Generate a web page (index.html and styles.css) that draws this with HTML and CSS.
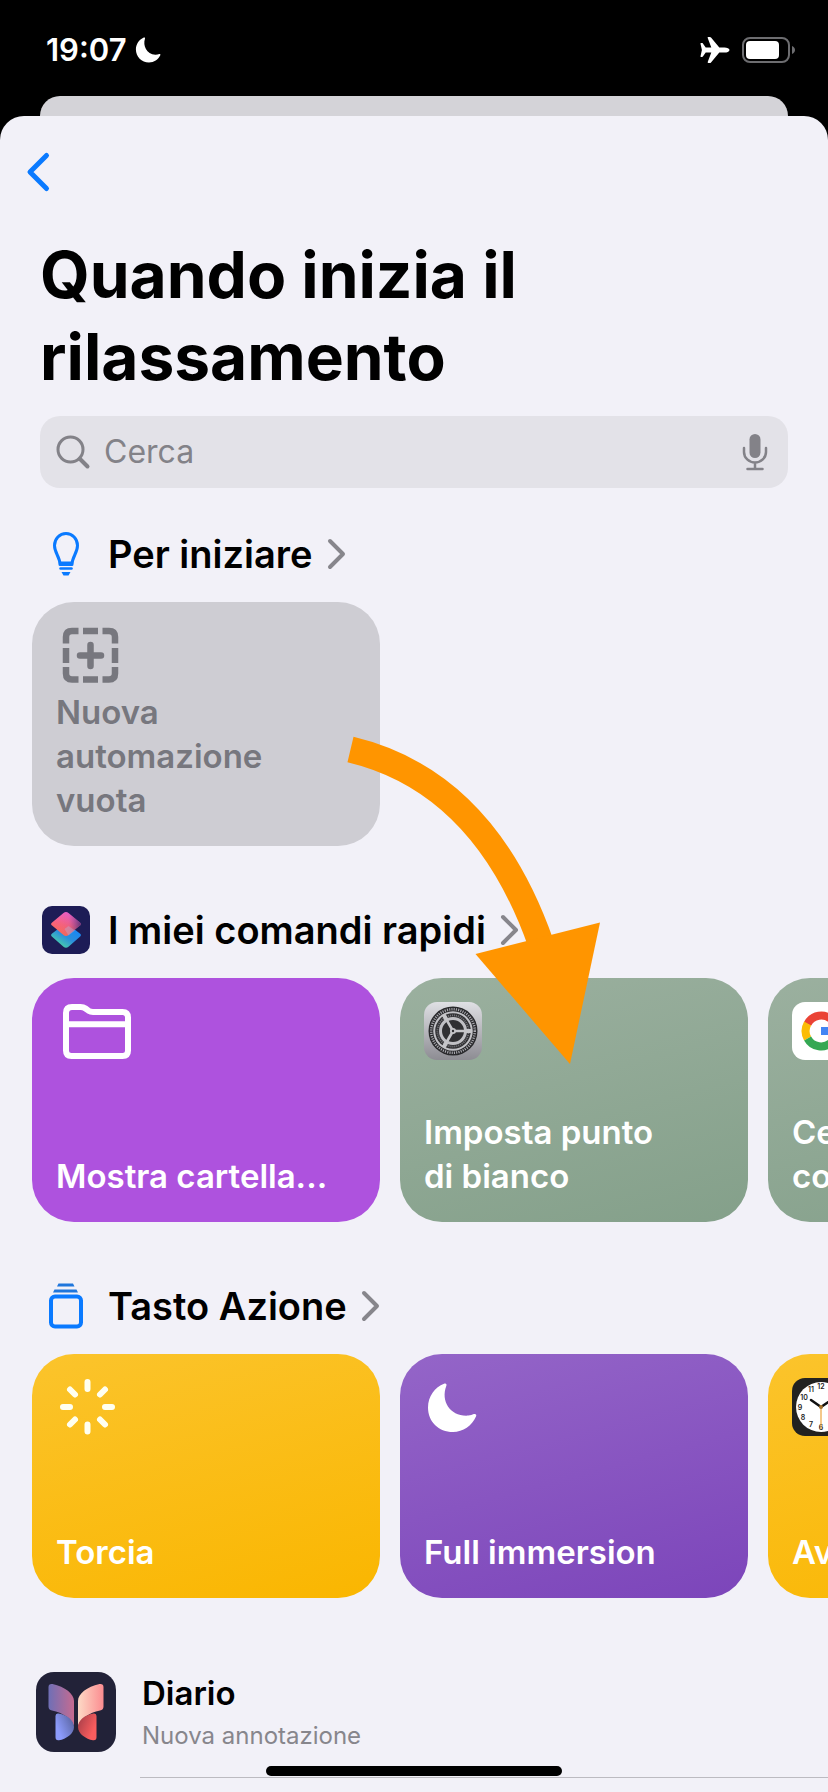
FILE: index.html
```html
<!DOCTYPE html>
<html lang="it">
<head>
<meta charset="utf-8">
<meta name="viewport" content="width=device-width, initial-scale=1">
<title>Quando inizia il rilassamento</title>
<link rel="stylesheet" href="styles.css">
</head>
<body>
<header class="status">
  <div class="status-left">
    <span class="time">19:07</span>
    <svg width="26" height="26" viewBox="0 0 26 26" aria-hidden="true"><path fill="#fff" d="M8.800.6c.8-.4 1.500.2 1.200 1C7.600 8.500 11.500 17.800 20.500 17.700c1.500 0 2.600-.2 3.800-.6.800-.3 1.400.4 1 1.200C23.200 22.700 19 25.500 14 25.500 6.600 25.500.9 19.800.9 12.600.9 7.200 4 2.700 8.800.6Z"/></svg>
  </div>
  <div class="status-right">
    <svg width="30" height="28" viewBox="0 0 30 28" aria-hidden="true"><path fill="#fff" d="M29.500 14c0 1.700-2.500 2.600-5 2.600h-5.200l-8.300 9.800c-.3.400-.7.600-1.100.6H8.300c-.5 0-.8-.4-.6-.9l3.600-9.500H5.700l-2.800 3.900c-.2.300-.5.400-.8.400H1c-.4 0-.6-.3-.5-.7L1.900 14 .5 7.800c-.1-.4.100-.7.500-.7h1.100c.3 0 .6.100.8.400l2.800 3.900h5.600L7.700 1.900c-.2-.5.100-.9.600-.9h1.600c.4 0 .8.200 1.100.6l8.300 9.800h5.200c2.500 0 5 .9 5 2.600Z"/></svg>
    <svg width="54" height="26" viewBox="0 0 54 26" aria-hidden="true"><rect x="1" y="1" width="46" height="24" rx="7" fill="none" stroke="#6d6d70" stroke-width="2"/><rect x="4" y="4" width="33" height="18" rx="4" fill="#fff"/><path d="M50 9c4 1.500 4 6.500 0 8Z" fill="#6d6d70"/></svg>
  </div>
</header>
<div class="sheet-behind"></div>
<main class="sheet">
  <button class="back" type="button" aria-label="Indietro"><svg width="24" height="40" viewBox="0 0 24 40"><path d="M20.500 3.500 4 20l16.500 16.500" fill="none" stroke="#0a7aff" stroke-width="5" stroke-linecap="round" stroke-linejoin="round"/></svg></button>
  <h1>Quando inizia il<br>rilassamento</h1>
  <div class="search">
    <svg width="34" height="34" viewBox="0 0 34 34" fill="none" stroke="#838288" stroke-linecap="round" aria-hidden="true"><circle cx="14.500" cy="14.500" r="12.500" stroke-width="3"/><path d="m24 24 7.500 7.500" stroke-width="4"/></svg>
    <input type="search" placeholder="Cerca" aria-label="Cerca">
    <button class="mic" type="button" aria-label="Dettatura"><svg width="26" height="38" viewBox="0 0 26 38" fill="none" stroke="#838288" stroke-width="2.500" stroke-linecap="round"><rect x="7.500" y="1" width="11" height="24" rx="5.500" fill="#838288" stroke="none"/><path d="M2 15v4a11 10.500 0 0 0 22 0v-4M13 30v6M5.500 36h15"/></svg></button>
  </div>

  <section>
    <h2><button class="heading" type="button">
      <svg class="symbol" viewBox="0 0 48 48" fill="none" stroke="#0a7aff" aria-hidden="true"><path d="M18 34.500c0-7.500-5.500-11.500-5.500-19A11.500 12 0 0 1 24 3.500a11.500 12 0 0 1 11.500 12c0 7.500-5.500 11.500-5.500 19Z" stroke-width="3" stroke-linejoin="round"/><path d="M17.500 33h13" stroke-width="3"/><path d="M18.500 38.500h11" stroke-width="2.500" stroke-linecap="round"/><path d="M19.500 42h9l-2 3.500h-5Z" fill="#0a7aff" stroke="none"/></svg>
      <span>Per iniziare</span>
      <svg class="chevron" viewBox="0 0 20 30" aria-hidden="true"><path d="M3 2l13 13L3 28"/></svg>
    </button></h2>
    <div class="cards">
      <button class="card gray" type="button">
        <svg class="glyph" viewBox="0 0 70 58" fill="none" stroke="#77777e" stroke-width="6.500" aria-hidden="true"><path d="M10 17.500V11q0-6 6-6h6.500M46.500 5H53q6 0 6 6v6.500M59 41v6.500q0 6-6 6h-6.500M22.500 53.500H16q-6 0-6-6V41M27 5h15M27 53.500h15M10 22v15M59 22v15"/><path d="M34.500 19v21M24 29.500h21" stroke-linecap="round"/></svg>
        <span class="label">Nuova<br>automazione<br>vuota</span>
      </button>
    </div>
  </section>

  <section>
    <h2><button class="heading" type="button">
      <svg class="symbol" viewBox="0 0 48 48" aria-hidden="true">
        <defs>
          <linearGradient id="s1" x1=".65" y1="0" x2=".3" y2="1"><stop stop-color="#ee5fd0"/><stop offset=".55" stop-color="#f9637c"/><stop offset="1" stop-color="#fa6c50"/></linearGradient>
          <linearGradient id="s2" x1=".9" y1=".2" x2=".25" y2="1"><stop stop-color="#1485fa"/><stop offset=".5" stop-color="#2b8fdc"/><stop offset="1" stop-color="#4edba0"/></linearGradient>
          <linearGradient id="s3" x1="0" x2="1"><stop stop-color="#ff6a70" stop-opacity="0"/><stop offset=".6" stop-color="#7c3f98" stop-opacity=".1"/><stop offset="1" stop-color="#3a2a72" stop-opacity=".8"/></linearGradient>
        </defs>
        <rect width="48" height="48" rx="10" fill="#1d1c56"/>
        <path d="m21.500 18.800-11.400 8.700q-2 1.600 0 3.200l11.400 10q2.500 2 5 0l11.400-10q2-1.600 0-3.200l-11.400-8.700q-2.500-2-5 0Z" fill="url(#s2)"/>
        <path d="M21.500 7 10.100 16.400q-2 1.600 0 3.200L21.500 29q2.500 2 5 0l11.400-9.400q2-1.600 0-3.200L26.500 7q-2.500-2-5 0Z" fill="url(#s1)"/>
        <path d="M21.500 7 10.100 16.400q-2 1.600 0 3.200L21.500 29q2.500 2 5 0l11.400-9.400q2-1.600 0-3.200L26.500 7q-2.500-2-5 0Z" fill="url(#s3)"/>
        <path d="m26.500 20-4 3 4 6.500 6.500-5Z" fill="#b9a8d0" fill-opacity=".45"/>
      </svg>
      <span>I miei comandi rapidi</span>
      <svg class="chevron" viewBox="0 0 20 30" aria-hidden="true"><path d="M3 2l13 13L3 28"/></svg>
    </button></h2>
    <div class="cards">
      <button class="card violet" type="button">
        <svg class="glyph" viewBox="0 0 70 58" fill="none" stroke="#fff" stroke-width="6" stroke-linejoin="round" aria-hidden="true"><path d="M10 11q0-6 6-6h8.500q3 0 5 1.500l3 2.200q2 1.300 4.500 1.300H66.500q5.500 0 5.500 5.500V48.500q0 5.500-5.500 5.500h-51q-5.500 0-5.500-5.500ZM10 22.200h62"/></svg>
        <span class="label">Mostra cartella...</span>
      </button>
      <button class="card sage" type="button">
        <svg class="app" viewBox="0 0 58 58" aria-hidden="true">
          <defs><linearGradient id="gr" x1="0" y1="0" x2="0" y2="1"><stop stop-color="#dfe0e4"/><stop offset="1" stop-color="#8d8c93"/></linearGradient></defs>
          <rect width="58" height="58" rx="13" fill="url(#gr)"/>
          <circle cx="29" cy="29" r="24.500" fill="#29292c"/>
          <circle cx="29" cy="29" r="21.800" fill="none" stroke="#aaaab0" stroke-width="2.500" stroke-dasharray="1.100 1.183"/>
          <circle cx="29" cy="29" r="19.800" fill="#c0c0c5"/>
          <circle cx="29" cy="29" r="17.800" fill="#303033"/>
          <circle cx="29" cy="29" r="15.600" fill="none" stroke="#78787e" stroke-width="1.800" stroke-dasharray="1 1"/>
          <circle cx="29" cy="29" r="12.500" fill="#303033" stroke="#c0c0c5" stroke-width="3"/>
          <path d="M29 29h19M29 29l-9.500-16.500M29 29l-9.500 16.500" stroke="#c5c5c9" stroke-width="2.600"/>
          <path d="M42 29h6M22.500 17.700l-3-5.200M22.500 40.300l-3 5.200" stroke="#c5c5c9" stroke-width="4"/>
          <circle cx="29" cy="29" r="3" fill="#c5c5c9"/><circle cx="29" cy="29" r="1.200" fill="#303033"/>
        </svg>
        <span class="label">Imposta punto<br>di bianco</span>
      </button>
      <button class="card sage" type="button">
        <svg class="app" viewBox="0 0 58 58" aria-hidden="true"><rect width="58" height="58" rx="13" fill="#fff"/><g fill="none" stroke-width="8"><path d="M15.500 22a15.300 15.300 0 0 1 24.500-4" stroke="#ea4335"/><path d="M15.600 36.500a15.300 15.300 0 0 1 0-15" stroke="#fbbc05"/><path d="M39.800 40A15.300 15.300 0 0 1 15.600 36.500" stroke="#34a853"/><path d="M39.800 40a15.300 15.300 0 0 0 4.500-11H29" stroke="#4285f4"/></g></svg>
        <span class="label">Cerca<br>con Google</span>
      </button>
    </div>
  </section>

  <section>
    <h2><button class="heading" type="button">
      <svg class="symbol" viewBox="0 0 48 48" fill="none" stroke="#0a7aff" aria-hidden="true"><rect x="9" y="14.500" width="30" height="30" rx="4" stroke-width="4"/><path d="m12.500 7.500-1.500 3h25l-1.500-3ZM16.500 1.500 15 4.500h17.500l-1.500-3Z" fill="#1f76dc" stroke="none"/></svg>
      <span>Tasto Azione</span>
      <svg class="chevron" viewBox="0 0 20 30" aria-hidden="true"><path d="M3 2l13 13L3 28"/></svg>
    </button></h2>
    <div class="cards">
      <button class="card yellow" type="button">
        <svg class="glyph" viewBox="0 0 70 58" stroke="#fffff0" stroke-width="6" stroke-linecap="round" aria-hidden="true"><path d="M31.500 4v7M31.500 46.500v7M7 29h7M49 29h7M14 11.500l5 5M44 41.500l5 5M49 11.500l-5 5M19 41.500l-5 5"/></svg>
        <span class="label">Torcia</span>
      </button>
      <button class="card purple" type="button">
        <svg class="glyph" viewBox="0 0 70 58" aria-hidden="true"><path fill="#fff" d="M20 5.800c1.800-.8 3.100.2 2.300 2.100-6 15.500 4.500 31 22 29.700 2.500-.2 3.700-.8 5.500-1.500 1.900-.7 3.100.700 2.200 2.500C48 48 39 54 29 54 14.500 54 4 43.500 4 29.500 4 18.500 11 9 20 5.800Z"/></svg>
        <span class="label">Full immersion</span>
      </button>
      <button class="card yellow" type="button">
        <svg class="app" viewBox="0 0 58 58" aria-hidden="true"><rect width="58" height="58" rx="13" fill="#222220"/><circle cx="29" cy="29" r="25" fill="#fff"/><g class="numerals"><text x="29" y="11">12</text><text x="19" y="14">11</text><text x="12" y="22">10</text><text x="8" y="32">9</text><text x="11" y="42">8</text><text x="19" y="49">7</text><text x="29" y="52">6</text></g><path d="m29 29-10-7M29 29l13-9" stroke="#111" stroke-width="2.500" stroke-linecap="round"/><path d="M29 27v24" stroke="#eda33c" stroke-width="1.200"/><circle cx="29" cy="29" r="2" fill="#a5732c"/></svg>
        <span class="label">Avvia</span>
      </button>
    </div>
  </section>

  <a class="row" href="#diario">
    <svg class="row-icon" viewBox="0 0 80 80" aria-hidden="true">
      <defs>
        <linearGradient id="j1" x1="0" x2="1"><stop stop-color="#6f6fb6"/><stop offset="1" stop-color="#c66b90"/></linearGradient>
        <linearGradient id="j2" x1="0" x2="1"><stop stop-color="#fddac6"/><stop offset="1" stop-color="#fb8c90"/></linearGradient>
        <linearGradient id="j3" x1=".2" y1=".7" x2="1" y2=".2"><stop stop-color="#8c9bfb"/><stop offset="1" stop-color="#59639f"/></linearGradient>
        <linearGradient id="j4" x1=".8" y1=".7" x2="0" y2=".2"><stop stop-color="#fa5d5e"/><stop offset="1" stop-color="#a93f49"/></linearGradient>
      </defs>
      <rect width="80" height="80" rx="18" fill="#222238"/>
      <path d="M12.500 15q0-3.500 4-3C29 14.500 38 22 38 29v25C35 46 27 41 16 38.500q-3.500-.7-3.500-4Z" fill="url(#j1)"/>
      <path d="M67.500 15q0-3.500-4-3C51 14.500 42 22 42 29v25C45 46 53 41 64 38.500q3.500-.7 3.500-4Z" fill="url(#j2)"/>
      <path d="M19.500 44q0-3 3-2.500C32 43 38 49 38 55c0 7-8 12-15 13.300q-3.500.5-3.500-3Z" fill="url(#j3)"/>
      <path d="M60.500 44q0-3-3-2.500C48 43 42 49 42 55c0 7 8 12 15 13.300q3.500.5 3.500-3Z" fill="url(#j4)"/>
    </svg>
    <span class="row-text"><span class="row-title">Diario</span><span class="row-sub">Nuova annotazione</span></span>
  </a>
  <svg class="arrow" width="260" height="332" viewBox="345 735 260 332" aria-hidden="true"><path d="M350.500 749.500Q484 781.500 541 944" fill="none" stroke="#ff9500" stroke-width="26"/><path d="M475.500 954 600 922.500 570 1064Z" fill="#ff9500"/></svg>
</main>
<div class="home-indicator"></div>
</body>
</html>
```

FILE: styles.css
```css
* { box-sizing: border-box; }
html { background: #000; }
body {
  margin: 0;
  min-height: 100vh;
  display: flex;
  flex-direction: column;
  overflow-x: hidden;
  font-family: Inter, "Liberation Sans", sans-serif;
  color: #000;
}
button {
  font: inherit;
  color: inherit;
  border: 0;
  padding: 0;
  background: none;
  text-align: left;
}
svg { display: block; flex: none; overflow: visible; }

.status {
  height: 96px;
  padding: 4px 32px 0 46px;
  display: flex;
  justify-content: space-between;
  align-items: center;
}
.status-left, .status-right { display: flex; align-items: center; }
.status-left { gap: 8px; }
.status-right { gap: 12px; }
.time { color: #fff; font-size: 31px; font-weight: 600; line-height: 40px; }

.sheet-behind {
  height: 20px;
  margin: 0 40px;
  border-radius: 20px 20px 0 0;
  background: #d4d3d8;
}
.sheet {
  position: relative;
  flex: 1;
  background: #f2f1f8;
  border-radius: 24px 24px 0 0;
  overflow: hidden;
}
.back { display: block; margin: 36px 0 0 26px; }
h1 {
  margin: 42px 40px 18px;
  font-size: 64px;
  line-height: 82px;
  font-weight: 700;
}

.search {
  height: 72px;
  margin: 0 40px;
  padding: 0 20px 0 16px;
  display: flex;
  align-items: center;
  gap: 14px;
  border-radius: 20px;
  background: #e3e2e8;
}
.search input {
  flex: 1;
  min-width: 0;
  height: 72px;
  padding: 0;
  border: 0;
  outline: 0;
  background: none;
  font: 400 32px/72px Inter, sans-serif;
  color: #000;
}
.search input::placeholder { color: #838288; opacity: 1; }

section { margin-bottom: 36px; }
.search + section { margin-top: 18px; }
h2 { margin: 0; font-size: 38px; font-weight: 600; line-height: 48px; }
.heading {
  height: 96px;
  padding: 0 42px;
  display: flex;
  align-items: center;
  gap: 18px;
}
.symbol { width: 48px; height: 48px; }
.chevron {
  width: 20px;
  height: 30px;
  margin-left: -4px;
  fill: none;
  stroke: #87868c;
  stroke-width: 4;
  stroke-linecap: round;
  stroke-linejoin: round;
}

.cards { display: flex; gap: 20px; padding-left: 32px; }
.card {
  flex: none;
  width: 348px;
  height: 244px;
  padding: 24px;
  display: flex;
  flex-direction: column;
  justify-content: space-between;
  border-radius: 42px;
  color: #fff;
}
.app { width: 58px; height: 58px; }
.glyph { width: 70px; height: 58px; }
.label { font-size: 33px; font-weight: 600; line-height: 44px; white-space: nowrap; }
.gray { background: #cecdd3; color: #77777e; }
.violet { background: #ae52de; }
.sage { background: linear-gradient(165deg, #9bb09f, #84a08a); }
.yellow { background: linear-gradient(165deg, #fbc42c, #fab600); }
.purple { background: linear-gradient(165deg, #9465c8, #7c45ba); }
.numerals { font-size: 7px; font-weight: 600; text-anchor: middle; fill: #222; }

.row {
  display: flex;
  align-items: flex-start;
  gap: 24px;
  padding: 38px 0 0 36px;
  color: inherit;
  text-decoration: none;
}
.row-icon { width: 80px; height: 80px; }
.row-text {
  flex: 1;
  height: 106px;
  padding-left: 2px;
  display: flex;
  flex-direction: column;
  gap: 4px;
  border-bottom: 1px solid #bcbbc1;
}
.row-title { font-size: 33px; font-weight: 600; line-height: 42px; }
.row-sub { font-size: 24px; line-height: 36px; color: #87868c; }

.arrow { position: absolute; left: 345px; top: 619px; }
.home-indicator {
  position: fixed;
  left: 50%;
  bottom: 16px;
  width: 296px;
  height: 10px;
  margin-left: -148px;
  border-radius: 5px;
  background: #000;
}
```
